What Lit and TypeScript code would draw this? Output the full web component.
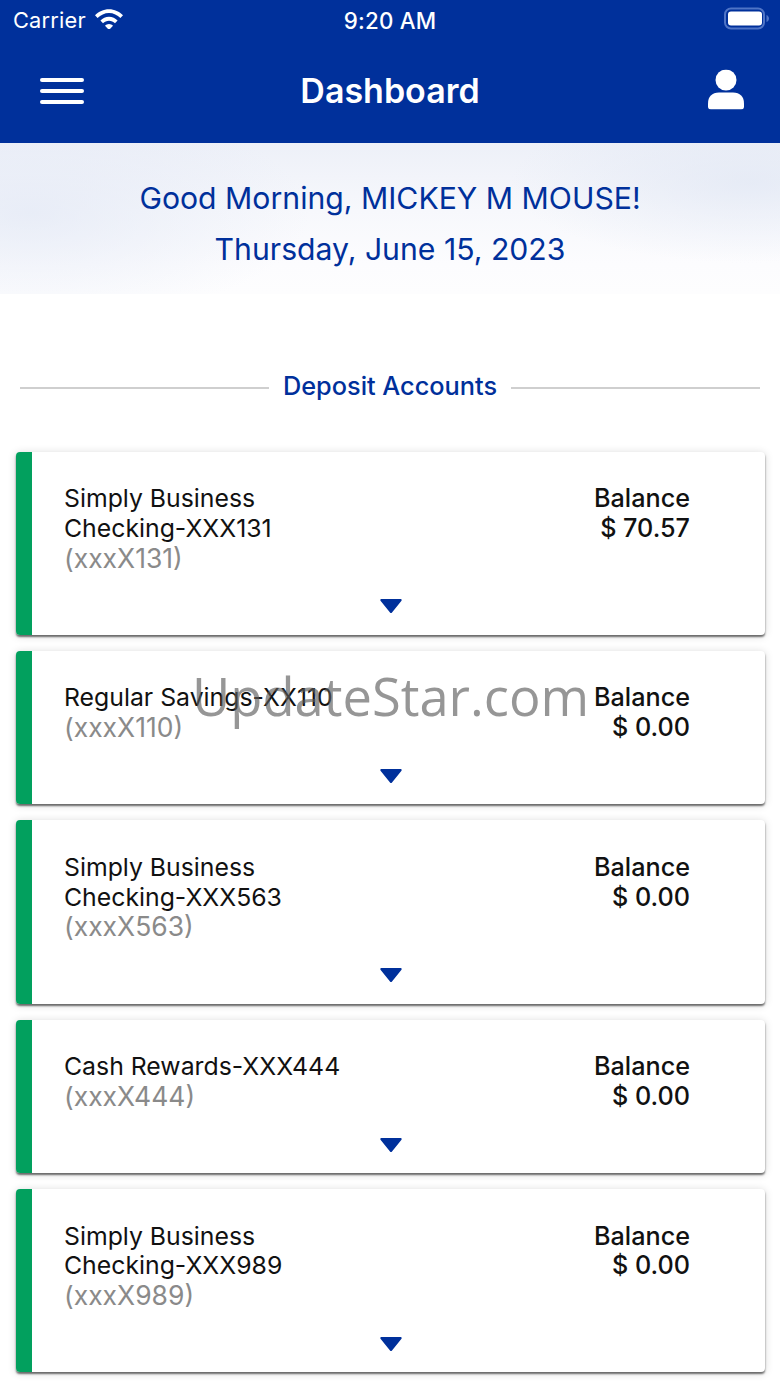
import { LitElement, html, css } from "lit";
import { customElement } from "lit/decorators.js";

const accounts = [
  { name: ["Simply Business", "Checking-XXX131"], mask: "(xxxX131)", bal: "$ 70.57" },
  { name: ["Regular Savings-XX110"], mask: "(xxxX110)", bal: "$ 0.00" },
  { name: ["Simply Business", "Checking-XXX563"], mask: "(xxxX563)", bal: "$ 0.00" },
  { name: ["Cash Rewards-XXX444"], mask: "(xxxX444)", bal: "$ 0.00" },
  { name: ["Simply Business", "Checking-XXX989"], mask: "(xxxX989)", bal: "$ 0.00" },
];

@customElement("app-root")
export class AppRoot extends LitElement {
  static styles = css`
    :host {
      display: block;
      position: relative;
      width: 780px;
      height: 1387px;
      overflow: hidden;
      background: #fff;
      font-family: Inter, "Liberation Sans", sans-serif;
      color: #111;
    }
    .top {
      background: #00309b;
      height: 143px;
      color: #fff;
      display: flex;
      flex-direction: column;
    }
    .status {
      height: 40px;
      display: grid;
      grid-template-columns: 1fr auto 1fr;
      align-items: center;
      padding: 0 10px 0 13px;
      font-size: 21.8px;
      letter-spacing: 0.2px;
    }
    .status .left { display: flex; align-items: center; gap: 8px; }
    .status .left svg { transform: translateY(-2px); }
    .status .time { font-weight: 500; font-size: 22.3px; transform: translateX(-1.5px); }
    .status .right { display: flex; justify-content: flex-end; }
    .status .right svg { transform: translateY(-1px); }
    .nav {
      flex: 1;
      display: grid;
      grid-template-columns: 1fr auto 1fr;
      align-items: center;
      padding: 0 36px 0 40px;
      margin-top: 2px;
      margin-bottom: 3px;
    }
    .nav h1 { margin: 0; font-size: 34px; font-weight: 600; letter-spacing: 0; transform: translate(-2px, -1px); }
    .nav svg { justify-self: end; transform: translateY(-1.5px); }
    .burger { display: flex; flex-direction: column; gap: 7px; width: 44px; }
    .burger i { display: block; height: 4px; background: #fff; border-radius: 2px; }
    .hero {
      height: 151px;
      background:
        radial-gradient(ellipse 280px 110px at 30px 70px, rgba(226,232,245,.7), transparent),
        radial-gradient(ellipse 240px 80px at 750px 40px, rgba(222,229,243,.6), transparent),
        linear-gradient(180deg, #edf0f8 0%, #f7f8fc 45%, #fcfcfe 80%, #fdfdfe 100%);
      color: #00309b;
      text-align: center;
      font-size: 30.2px;
      box-sizing: border-box;
      padding-top: 30px;
    }
    .hero div { height: 51px; line-height: 50px; }
    .section {
      margin-top: 76px;
      padding: 0 20px;
      display: flex;
      align-items: center;
      gap: 14px;
      height: 30px;
      color: #00309b;
      font-size: 25.3px;
      font-weight: 500;
    }
    .section::before, .section::after {
      content: "";
      flex: 1;
      height: 2px;
      margin-top: 6px;
      background: #cfcfcf;
    }
    .list {
      margin-top: 51.5px;
      padding: 0 15px 0 16px;
      display: flex;
      flex-direction: column;
      gap: 16px;
    }
    .card {
      display: flex;
      background: #fff;
      border-radius: 4px;
      overflow: hidden;
      box-shadow: 0 2px 2px rgba(0,0,0,.55), 0 1px 9px rgba(0,0,0,.16);
    }
    .bar { width: 16px; background: #02a05e; flex: none; }
    .body { flex: 1; padding: 32.5px 75px 0 32px; }
    .row { display: flex; justify-content: space-between; font-size: 24.8px; line-height: 29.75px; }
    .mask { color: #8a8a8a; font-size: 26.5px; }
    .bal { text-align: right; font-weight: 500; color: #111; font-size: 25.2px; }
    .bal span { display: block; }
    .arrow { display: flex; justify-content: center; height: 61.5px; padding: 26px 0 0 0; box-sizing: border-box; }
    .arrow svg { display: block; margin-left: 28px; }
    .wm {
      position: absolute;
      left: 192px;
      top: 661px;
      font-family: "Open Sans", sans-serif;
      font-size: 52.5px;
      line-height: 70px;
      color: rgba(90,90,90,.64);
      white-space: nowrap;
      pointer-events: none;
    }
  `;

  render() {
    return html`
      <div class="top">
        <div class="status">
          <div class="left">
            <span>Carrier</span>
            <svg width="30" height="22" viewBox="0 0 30 22" fill="#fff">
              <path d="M1 8.2C4.6 4.6 9.5 2.2 15 2.2s10.400 2.400 14 6l-2.600 2.800C23.400 8 19.400 6 15 6S6.600 8 3.600 11z"/>
              <path d="M6.400 13.600C8.700 11.300 11.700 9.800 15 9.800s6.300 1.500 8.600 3.800L21 16.300c-1.600-1.600-3.700-2.600-6-2.600s-4.400 1-6 2.600z"/>
              <path d="M11 18.800c1-1.100 2.500-1.800 4-1.800s3 .7 4 1.800l-4 4.200z"/>
            </svg>
          </div>
          <div class="time">9:20 AM</div>
          <div class="right">
            <svg width="46" height="24" viewBox="0 0 46 24">
              <rect x="1" y="1.500" width="39" height="20" rx="6" fill="none" stroke="#4f74c6" stroke-width="2"/>
              <rect x="4" y="4.500" width="34" height="14" rx="3" fill="#fff"/>
              <path d="M42.500 8c1.500.5 2.500 2 2.500 3.500s-1 3-2.500 3.500z" fill="#4f74c6"/>
            </svg>
          </div>
        </div>
        <div class="nav">
          <div class="burger"><i></i><i></i><i></i></div>
          <h1>Dashboard</h1>
          <svg width="36" height="40" viewBox="0 0 36 40" fill="#fff">
            <circle cx="18" cy="10.500" r="10.500"/>
            <path d="M0 34C0 27 4 23 11 23H25C32 23 36 27 36 34V37a3 3 0 0 1-3 3H3a3 3 0 0 1-3-3z"/>
          </svg>
        </div>
      </div>
      <div class="hero">
        <div>Good Morning, MICKEY M MOUSE!</div>
        <div>Thursday, June 15, 2023</div>
      </div>
      <div class="section">Deposit Accounts</div>
      <div class="list">
        ${accounts.map(
          (a) => html`
            <div class="card">
              <div class="bar"></div>
              <div class="body">
                <div class="row">
                  <div>
                    ${a.name.map((n) => html`<div>${n}</div>`)}
                    <div class="mask">${a.mask}</div>
                  </div>
                  <div class="bal"><span>Balance</span><span>${a.bal}</span></div>
                </div>
                <div class="arrow">
                  <svg width="22" height="14" viewBox="0 0 22 14" fill="#00309b"><path d="M1.500 0h19c1 0 1.500 1 1 1.700L12 13.400c-.5.800-1.500.800-2 0L.5 1.700C0 1 .5 0 1.500 0z"/></svg>
                </div>
              </div>
            </div>
          `
        )}
      </div>
      <div class="wm">UpdateStar.com</div>
    `;
  }
}
